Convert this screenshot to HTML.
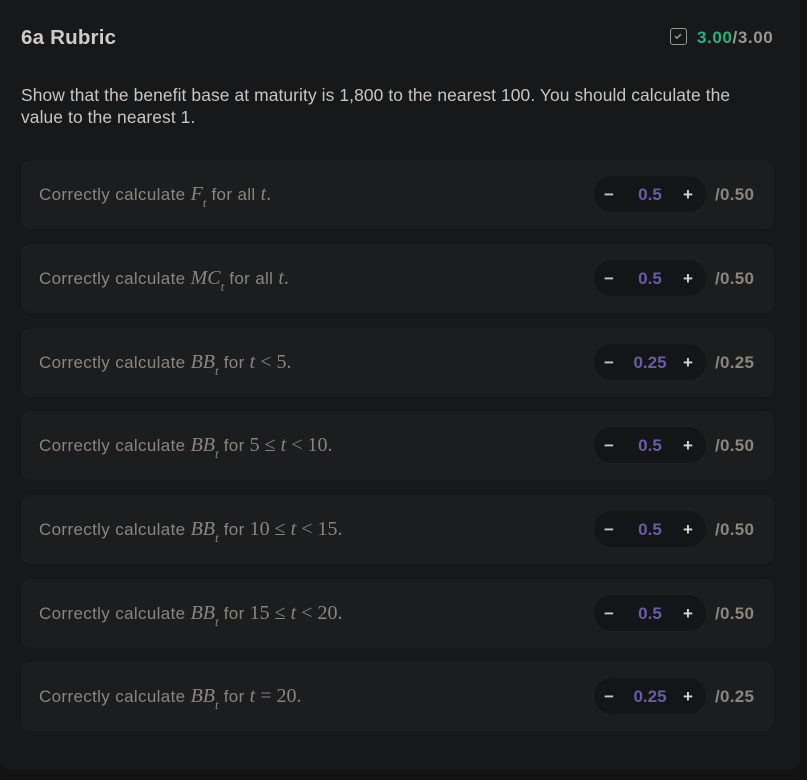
<!DOCTYPE html>
<html><head><meta charset="utf-8"><style>
*{margin:0;padding:0;box-sizing:border-box}
body{width:807px;height:780px;background:#111214;font-family:"Liberation Sans",sans-serif;position:relative;overflow:hidden}
.card{position:absolute;left:0;top:-12px;width:800px;height:782px;background:#17181a;border-radius:12px}
.title{position:absolute;left:21px;top:26px;font-size:20.5px;font-weight:bold;color:#cfcbc6;letter-spacing:0.2px}
.score{position:absolute;left:697px;top:28px;font-size:17px;font-weight:bold;color:#9a958e;letter-spacing:0.6px}
.score .g{color:#20b57f}
.chk{position:absolute;left:670px;top:28px;width:17px;height:17px;border:1.5px solid #9a958e;border-radius:3px}
.q{position:absolute;left:21px;top:84px;width:760px;font-size:17.4px;line-height:22px;color:#c9c5c0;letter-spacing:0.1px}
.row{position:absolute;left:21px;width:753px;height:69px;background:#1c1d1f;border-radius:10px}
.lbl{position:absolute;left:18px;top:23px;font-size:17px;color:#8a857d;white-space:nowrap;letter-spacing:0.35px}
.m{font-family:"Liberation Serif",serif;font-size:20px;letter-spacing:0}
.m i{font-style:italic}
sub{font-size:13px;position:relative;top:2px}
.pill{position:absolute;left:573px;top:16px;width:112px;height:36px;background:#141516;border-radius:18px}
.pill span{position:absolute;top:9px;font-size:17px;font-weight:bold}
.mi{left:10px;color:#c9c5c0}
.pl{left:89px;color:#d8d4cf}
.v{left:0;width:112px;text-align:center;color:#6a5ba8}
.max{position:absolute;left:694px;top:25px;font-size:17px;font-weight:bold;color:#8a857d;letter-spacing:0.3px}
</style></head><body>
<div class="card"></div>
<div class="title">6a Rubric</div>
<div class="chk"><svg width="14" height="14" viewBox="0 0 14 14" style="position:absolute;left:0;top:0"><path d="M4 7.2l2 2 4-4" stroke="#9a958e" stroke-width="1.5" fill="none"/></svg></div>
<div class="score"><span class="g">3.00</span>/3.00</div>
<div class="q">Show that the benefit base at maturity is 1,800 to the nearest 100. You should calculate the<br>value to the nearest 1.</div>

<div class="row" style="top:160px"><div class="lbl">Correctly calculate <span class="m"><i>F<sub>t</sub></i></span> for all <span class="m"><i>t</i>.</span></div><div class="pill"><span class="mi">−</span><span class="v">0.5</span><span class="pl">+</span></div><div class="max">/0.50</div></div>
<div class="row" style="top:244px"><div class="lbl">Correctly calculate <span class="m"><i>MC<sub>t</sub></i></span> for all <span class="m"><i>t</i>.</span></div><div class="pill"><span class="mi">−</span><span class="v">0.5</span><span class="pl">+</span></div><div class="max">/0.50</div></div>
<div class="row" style="top:328px"><div class="lbl">Correctly calculate <span class="m"><i>BB<sub>t</sub></i></span> for <span class="m"><i>t</i> &lt; 5.</span></div><div class="pill"><span class="mi">−</span><span class="v">0.25</span><span class="pl">+</span></div><div class="max">/0.25</div></div>
<div class="row" style="top:411px"><div class="lbl">Correctly calculate <span class="m"><i>BB<sub>t</sub></i></span> for <span class="m">5 ≤ <i>t</i> &lt; 10.</span></div><div class="pill"><span class="mi">−</span><span class="v">0.5</span><span class="pl">+</span></div><div class="max">/0.50</div></div>
<div class="row" style="top:495px"><div class="lbl">Correctly calculate <span class="m"><i>BB<sub>t</sub></i></span> for <span class="m">10 ≤ <i>t</i> &lt; 15.</span></div><div class="pill"><span class="mi">−</span><span class="v">0.5</span><span class="pl">+</span></div><div class="max">/0.50</div></div>
<div class="row" style="top:579px"><div class="lbl">Correctly calculate <span class="m"><i>BB<sub>t</sub></i></span> for <span class="m">15 ≤ <i>t</i> &lt; 20.</span></div><div class="pill"><span class="mi">−</span><span class="v">0.5</span><span class="pl">+</span></div><div class="max">/0.50</div></div>
<div class="row" style="top:662px"><div class="lbl">Correctly calculate <span class="m"><i>BB<sub>t</sub></i></span> for <span class="m"><i>t</i> = 20.</span></div><div class="pill"><span class="mi">−</span><span class="v">0.25</span><span class="pl">+</span></div><div class="max">/0.25</div></div>
</body></html>
